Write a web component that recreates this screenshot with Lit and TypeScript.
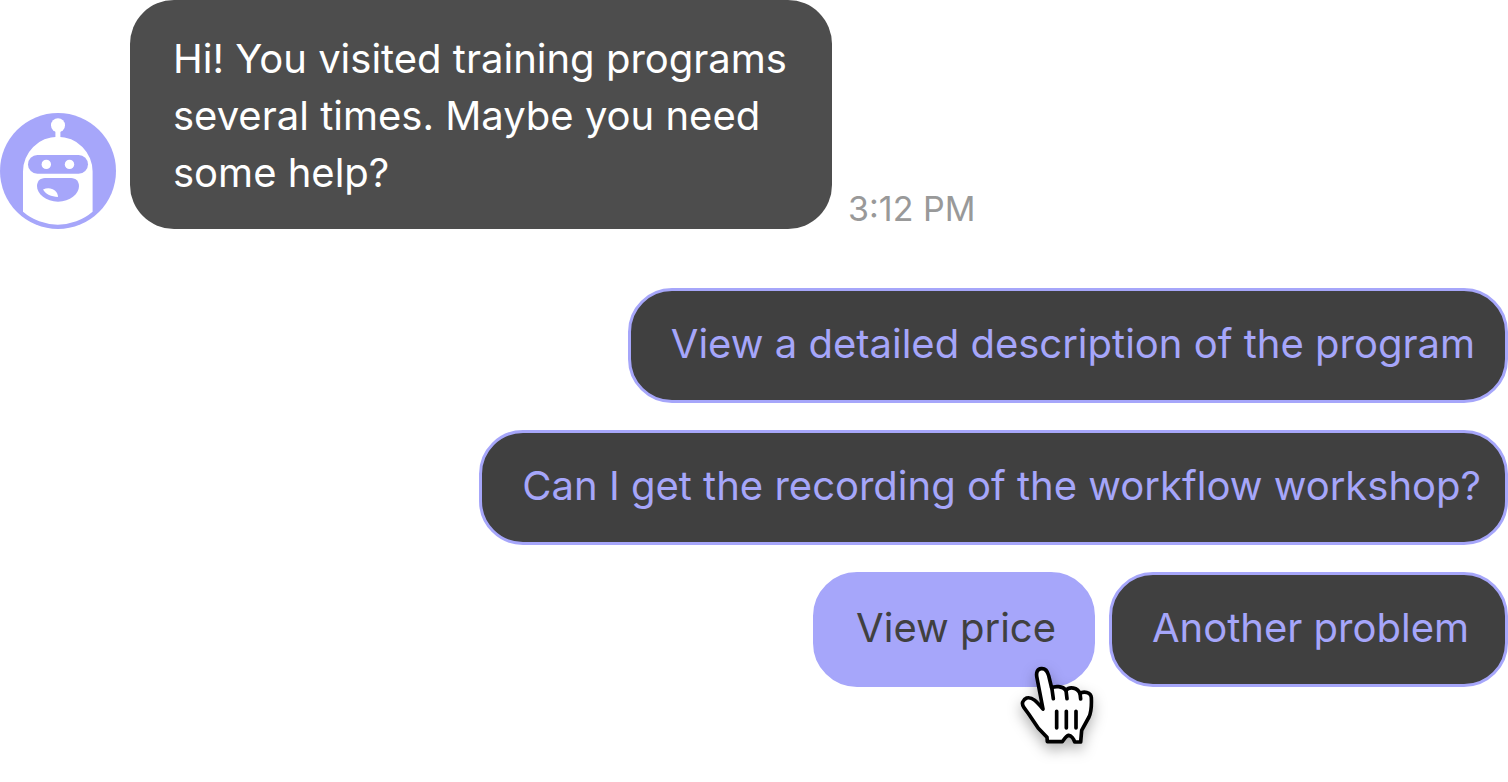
import { LitElement, html, css } from "lit";
import { customElement } from "lit/decorators.js";

@customElement("bot-avatar")
export class BotAvatar extends LitElement {
  static styles = css`
    :host {
      display: block;
      flex: none;
      width: 116px;
      height: 116px;
    }
    svg {
      display: block;
    }
  `;

  render() {
    return html`
      <svg width="116" height="116" viewBox="0 0 116 116" role="img" aria-label="Assistant">
        <circle cx="58" cy="58" r="58" fill="#a6a6fa" />
        <circle cx="58" cy="12.3" r="7" fill="#fff" />
        <path d="M55.4 17h5v9h-5z" fill="#fff" />
        <path
          d="M23 58.5a34.8 34.8 0 0 1 69.6 0V98.8a53.6 53.6 0 0 1-69.6 0z"
          fill="#fff"
        />
        <rect x="28" y="42" width="60" height="18.8" rx="9.4" fill="#a6a6fa" />
        <circle cx="46.3" cy="51.4" r="4.7" fill="#fff" />
        <circle cx="69.5" cy="51.4" r="4.7" fill="#fff" />
        <path
          d="M45 65H71C76 65 79 68.600 79 73C79 81 70 88.700 58 88.700C46 88.700 37 81 37 73C37 68.600 40 65 45 65z"
          fill="#a6a6fa"
        />
        <path d="M43 76.500C50 73 58 77 58 84C51 83.600 46 81.500 43 76.500z" fill="#fff" />
      </svg>
    `;
  }
}

@customElement("hand-pointer")
export class HandPointer extends LitElement {
  static styles = css`
    :host {
      display: block;
      pointer-events: none;
    }
    svg {
      display: block;
      overflow: visible;
      filter: drop-shadow(0 6px 7px rgba(0, 0, 0, 0.3));
    }
  `;

  render() {
    return html`
      <svg width="76" height="80" viewBox="60 45 228 240" aria-hidden="true">
        <path
          d="M132 177L114 84C110 66 116 57 127 56C139 55 146 65 149 77L158 114C166 108 191 107 201 121C211 109 236 112 243 131C253 122 276 126 277 143C278 165 277 186 270 201L248 241L245 276H227C224 266 216 257 209 256C201 258 196 267 190 275H145L144 262L118 235L89 192L75 173C66 161 71 149 83 144C100 139 114 156 132 177z"
          fill="#fff"
          stroke="#000"
          stroke-width="11"
          stroke-linejoin="round"
        />
        <path
          d="M158 110L163 146M201 121L204 146M243 129L245 147M173 184V234M202 184V234M231 184V234"
          fill="none"
          stroke="#000"
          stroke-width="11"
          stroke-linecap="round"
        />
      </svg>
    `;
  }
}

@customElement("app-root")
export class AppRoot extends LitElement {
  static styles = css`
    :host {
      display: block;
      box-sizing: border-box;
      min-height: 100vh;
      background: #fff;
      font-family: Inter, sans-serif;
      font-size: 40px;
      font-weight: 400;
      line-height: 57px;
      font-optical-sizing: none;
    }
    .message {
      display: flex;
      align-items: flex-end;
    }
    .bubble {
      box-sizing: border-box;
      max-width: 702px;
      margin: 0 16px 0 14px;
      padding: 30px 43px 28px;
      border-radius: 44px;
      background: #4d4d4d;
      color: #fff;
    }
    .time {
      font-size: 34px;
      line-height: 40px;
      color: #999;
    }
    .replies {
      display: flex;
      flex-direction: column;
      gap: 27px;
      margin-top: 59px;
    }
    .row {
      display: flex;
      justify-content: flex-end;
      gap: 14px;
    }
    .slot {
      position: relative;
    }
    .reply {
      display: block;
      padding: 24px 36px 28px 40px;
      border: 3px solid #a6a6fa;
      border-radius: 44px;
      background: #404040;
      color: #a6a6fa;
      font: inherit;
      text-align: left;
      cursor: pointer;
    }
    .long {
      padding-right: 30px;
    }
    .longest {
      padding-right: 24px;
    }
    .active {
      background: #a6a6fa;
      color: #404040;
    }
    .pointer {
      position: absolute;
      right: 0;
      bottom: -58px;
    }
  `;

  render() {
    return html`
      <div class="message">
        <bot-avatar></bot-avatar>
        <div class="bubble">
          Hi! You visited training programs several times. Maybe you need some help?
        </div>
        <time class="time" datetime="15:12">3:12 PM</time>
      </div>
      <div class="replies">
        <div class="row">
          <button class="reply long">View a detailed description of the program</button>
        </div>
        <div class="row">
          <button class="reply longest">Can I get the recording of the workflow workshop?</button>
        </div>
        <div class="row">
          <div class="slot">
            <button class="reply active">View price</button>
            <hand-pointer class="pointer"></hand-pointer>
          </div>
          <button class="reply">Another problem</button>
        </div>
      </div>
    `;
  }
}
